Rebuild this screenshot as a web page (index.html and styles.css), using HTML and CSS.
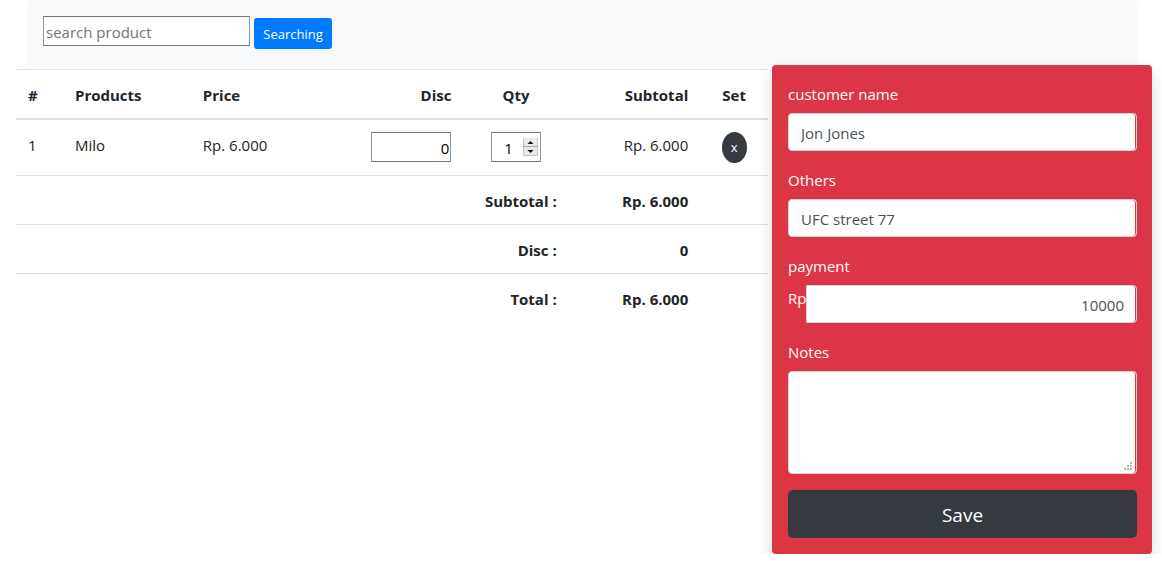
FILE: index.html
```html
<!DOCTYPE html>
<html lang="en">
<head>
<meta charset="utf-8">
<meta name="viewport" content="width=device-width, initial-scale=1">
<title>Cashier</title>
<link rel="stylesheet" href="styles.css">
</head>
<body>
<form class="searchbar">
  <input class="field search-field" type="text" placeholder="search product" aria-label="search product">
  <button class="btn btn-primary" type="button">Searching</button>
</form>
<main class="layout">
  <section class="cart">
    <table class="cart-table">
      <colgroup>
        <col class="col-no"><col class="col-product"><col class="col-price"><col class="col-disc"><col class="col-qty"><col class="col-subtotal"><col class="col-set">
      </colgroup>
      <thead>
        <tr>
          <th>#</th><th>Products</th><th>Price</th><th class="right">Disc</th><th class="center">Qty</th><th class="right">Subtotal</th><th class="center">Set</th>
        </tr>
      </thead>
      <tbody>
        <tr class="item">
          <td>1</td>
          <td>Milo</td>
          <td>Rp. 6.000</td>
          <td class="right input-cell"><input class="field disc-field" type="text" value="0" aria-label="Disc"></td>
          <td class="center input-cell"><input class="field qty-field" type="number" value="1" min="1" aria-label="Qty"></td>
          <td class="right">Rp. 6.000</td>
          <td class="center input-cell"><button class="btn btn-remove" type="button">x</button></td>
        </tr>
        <tr><th colspan="5" class="right">Subtotal :</th><th class="right">Rp. 6.000</th><th></th></tr>
        <tr><th colspan="5" class="right">Disc :</th><th class="right">0</th><th></th></tr>
        <tr><th colspan="5" class="right">Total :</th><th class="right">Rp. 6.000</th><th></th></tr>
      </tbody>
    </table>
  </section>
  <form class="card">
    <div class="group">
      <label for="customer">customer name</label>
      <input class="control" id="customer" type="text" value="Jon Jones">
    </div>
    <div class="group">
      <label for="others">Others</label>
      <input class="control" id="others" type="text" value="UFC street 77">
    </div>
    <div class="group">
      <label for="payment">payment</label>
      <div class="input-group">
        <span>Rp</span>
        <input class="control amount" id="payment" type="text" value="10000">
      </div>
    </div>
    <div class="group">
      <label for="notes">Notes</label>
      <textarea class="control notes" id="notes"></textarea>
    </div>
    <button class="btn-save" type="button">Save</button>
  </form>
</main>
</body>
</html>
```
FILE: styles.css
```css
*, *::before, *::after { box-sizing: border-box; }

body {
  margin: 0;
  background: #fff;
  color: #212529;
  font-family: "Segoe UI", "Open Sans", "Noto Sans", sans-serif;
  font-size: 15px;
  line-height: 24px;
}

input, button, textarea { margin: 0; font: inherit; }

.searchbar {
  display: flex;
  align-items: flex-start;
  gap: 4px;
  margin: 0 25px 0 27px;
  padding: 16px;
  background: #f8f9fa;
  border-radius: 4px;
}

.field {
  height: 30px;
  padding: 2px 1px 0 2px;
  background: #fff;
  border: 1px solid;
  border-color: #767676 #949494;
  border-radius: 0;
  color: #000;
}

.search-field { width: 207px; }
.search-field::placeholder { color: #757575; }

.btn {
  border: 0;
  color: #fff;
  height: 31px;
  font-size: 13px;
  line-height: 21px;
}

.btn-primary {
  width: 78px;
  margin-top: 2px;
  padding: 6px 8px 4px;
  background: #007bff;
  border-radius: 3px;
}

.layout {
  display: grid;
  grid-template-columns: minmax(0, 752fr) minmax(0, 380fr);
  align-items: start;
  gap: 4px;
  padding: 0 10px 0 16px;
}

.cart { padding-top: 4px; }

.cart-table {
  width: 100%;
  table-layout: fixed;
  border-collapse: separate;
  border-spacing: 0;
}

.col-no { width: 6.25%; }
.col-product { width: 17%; }
.col-price { width: 22.25%; }
.col-disc { width: 14%; }
.col-qty { width: 14%; }
.col-subtotal { width: 17.5%; }
.col-set { width: 9%; }

.cart-table th, .cart-table td {
  padding: 12px;
  border-top: 1px solid #dee2e6;
  text-align: left;
  vertical-align: top;
}

.cart-table th { font-weight: 700; }
.cart-table thead th { border-bottom: 2px solid #dee2e6; }
.cart-table thead th, .cart-table tbody th { padding-top: 13px; padding-bottom: 11px; }
.cart-table .item td { border-top: 0; padding-top: 13px; }
.cart-table .item .input-cell { padding-top: 12px; }
.cart-table .right { text-align: right; }
.cart-table .center { text-align: center; }

.disc-field, .qty-field, .btn-remove { display: block; margin-left: auto; }
.disc-field { width: 80px; text-align: right; }

.qty-field {
  width: 50px;
  margin-right: auto;
  text-align: center;
}

.qty-field::-webkit-inner-spin-button {
  -webkit-appearance: none;
  width: 15px;
  height: 18px;
  margin-right: 1px;
  opacity: 1;
  background: url("data:image/svg+xml,%3Csvg xmlns='http://www.w3.org/2000/svg' width='15' height='18'%3E%3Cpath fill='%23e9e9e9' d='M0 0h15v18H0z'/%3E%3Cpath fill='none' stroke='%23c4c4c4' d='M.5 0v17.5h14V0'/%3E%3Cpath fill='%23aaa' d='M0 8h15v1H0z'/%3E%3Cpath fill='%23111' d='M4.500 6h6L7.500 3zM4.500 12h6l-3 3z'/%3E%3C/svg%3E") center no-repeat;
}

.btn-remove {
  width: 25px;
  margin-right: auto;
  padding: 5px 0;
  background: #343a40;
  border-radius: 50%;
}

.card {
  padding: 16px 15px 16px 16px;
  background: #dc3545;
  border-radius: 4px;
  box-shadow: 0 8px 16px rgba(0, 0, 0, .15);
  color: #fff;
}

.group { margin-bottom: 16px; }
.group label { display: block; padding-top: 1px; margin-bottom: 7px; }

.control {
  display: block;
  width: 100%;
  height: 38px;
  padding: 8px 12px 6px;
  background: #fff;
  border: 1px solid #ced4da;
  border-radius: 4px;
  box-shadow: inset -1px 0 #dc3545;
  color: #495057;
}

.input-group { display: flex; }
.input-group span { padding-top: 1px; }

.amount {
  flex: 1;
  min-width: 0;
  border-radius: 0 4px 4px 0;
  text-align: right;
}

.notes { height: 103px; resize: vertical; }

.notes::-webkit-resizer {
  background: url("data:image/svg+xml,%3Csvg xmlns='http://www.w3.org/2000/svg' width='15' height='15'%3E%3Cpath fill='%23b5b5b5' d='M9 4h2v2H9zM6 7h2v2H6zM9 7h2v2H9zM3 10h2v2H3zM6 10h2v2H6zM9 10h2v2H9z'/%3E%3C/svg%3E") right bottom no-repeat;
}

.btn-save {
  display: block;
  width: 100%;
  padding: 10px 16px 8px;
  background: #343a40;
  border: 0;
  border-radius: 5px;
  color: #fff;
  font-size: 19px;
  line-height: 30px;
}
```
